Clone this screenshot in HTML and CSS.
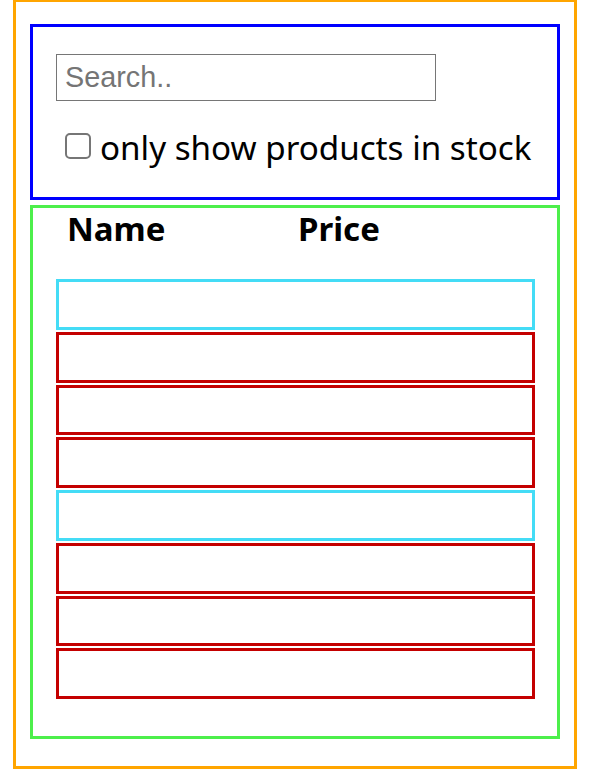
FILE: index.html
```html
<!DOCTYPE html>
<html>
<head>
<meta charset="utf-8">
<link rel="stylesheet" href="styles.css">
</head>
<body>
<div class="app">
  <div class="search-bar">
    <input class="search-input" type="text" placeholder="Search..">
    <label class="stock-row">
      <input class="stock-check" type="checkbox">
      <span class="stock-label">only show products in stock</span>
    </label>
  </div>
  <div class="product-table">
    <div class="table-head">
      <span class="col-name">Name</span>
      <span class="col-price">Price</span>
    </div>
    <div class="rows">
      <div class="row category"></div>
      <div class="row product"></div>
      <div class="row product"></div>
      <div class="row product"></div>
      <div class="row category"></div>
      <div class="row product"></div>
      <div class="row product"></div>
      <div class="row product"></div>
    </div>
  </div>
</div>
</body>
</html>
```

FILE: styles.css
```css
html, body {
  margin: 0;
  padding: 0;
  background: #ffffff;
}

.app {
  box-sizing: border-box;
  width: 564px;
  height: 770px;
  margin: -1px 0 0 13px;
  border: 3px solid #ffa500;
  padding: 22px 14px 27px 14px;
  display: flex;
  flex-direction: column;
  gap: 5px;
}

.search-bar {
  box-sizing: border-box;
  height: 176px;
  border: 3px solid #0000ff;
  padding: 27px 23px 0 23px;
  display: flex;
  flex-direction: column;
  align-items: flex-start;
}

.search-input {
  box-sizing: border-box;
  width: 380px;
  height: 47px;
  margin: 0;
  border: 1px solid #767676;
  border-radius: 0;
  padding: 0 0 0 8px;
  font-family: "Liberation Sans", Arial, sans-serif;
  font-size: 28.8px;
  color: #000;
  outline: none;
}

.search-input::placeholder {
  color: #757575;
}

.stock-row {
  display: flex;
  align-items: flex-start;
  margin-top: 25px;
  margin-left: 9px;
}

.stock-check {
  -webkit-appearance: none;
  appearance: none;
  box-sizing: border-box;
  width: 26px;
  height: 26px;
  margin: 7px 9px 0 0;
  border: 2px solid #767676;
  border-radius: 5px;
  background: #fff;
}

.stock-label {
  font-family: "Noto Sans", "Open Sans", sans-serif;
  font-size: 33.2px;
  line-height: 44px;
  color: #000;
}

.product-table {
  box-sizing: border-box;
  flex: 1;
  border: 3px solid #4def4b;
  padding: 0 22px 0 23px;
  display: flex;
  flex-direction: column;
}

.table-head {
  display: flex;
  font-family: "Noto Sans", "Open Sans", sans-serif;
  font-weight: bold;
  font-size: 33px;
  line-height: 42px;
  color: #000;
  padding-left: 11px;
}

.col-name {
  width: 231px;
}

.rows {
  margin-top: 29px;
  display: flex;
  flex-direction: column;
  gap: 2px;
}

.row {
  box-sizing: border-box;
  height: 50.75px;
  border: 3px solid #c40000;
}

.row.category {
  border-color: #44dcf6;
}
```
